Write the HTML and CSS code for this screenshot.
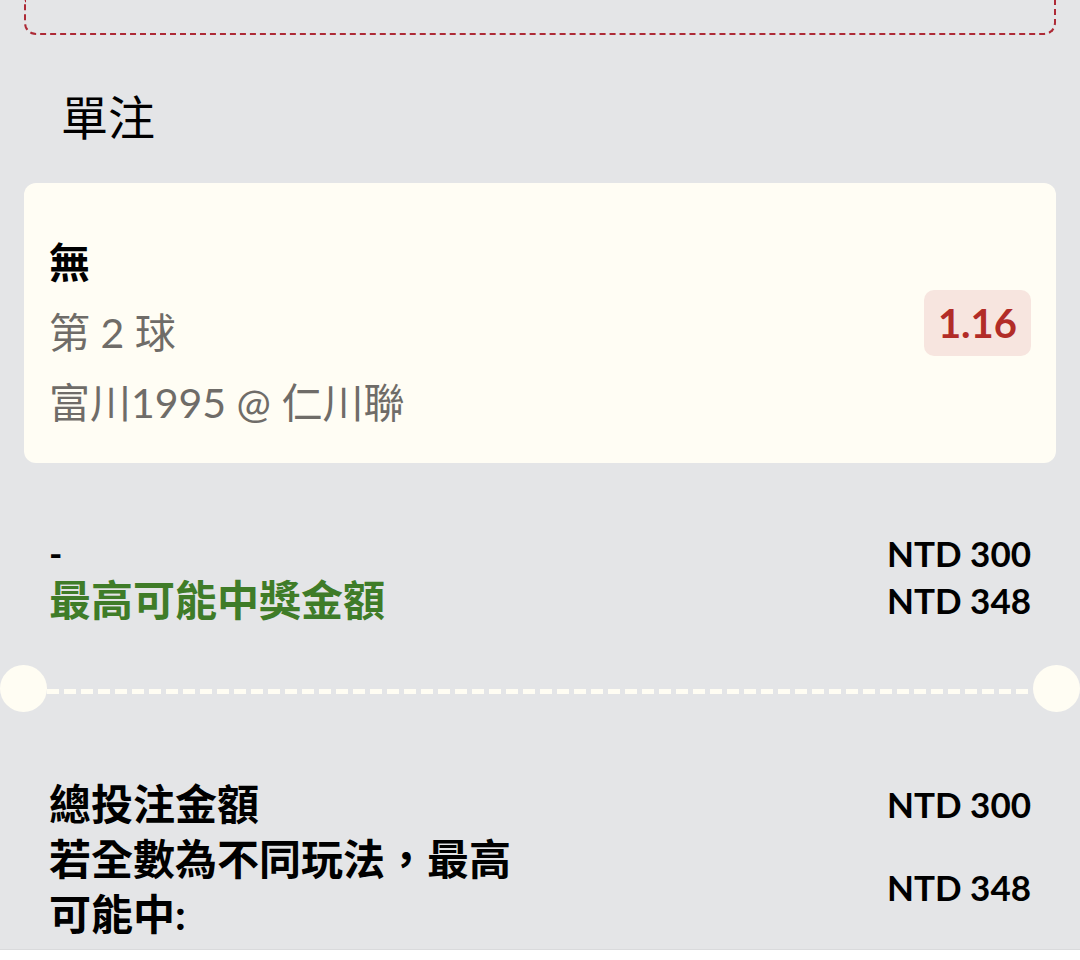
FILE: index.html
```html
<!DOCTYPE html>
<html>
  <head>
    <link rel="stylesheet" href="styles.css">
  </head>
  <body>
    <div class="promo-box"></div>

    <h2 class="section-title">單注</h2>

    <section class="bet-card">
      <div class="bet-info">
        <div class="bet-pick">無</div>
        <div class="bet-market">第 2 球</div>
        <div class="bet-match">富川1995 @ 仁川聯</div>
      </div>
      <div class="odds">1.16</div>
    </section>

    <section class="stake">
      <div class="amount-row">
        <span class="stake-label">-</span>
        <span class="amount">NTD 300</span>
      </div>
      <div class="amount-row">
        <span class="payout-label">最高可能中獎金額</span>
        <span class="amount">NTD 348</span>
      </div>
    </section>

    <div class="ticket-divider">
      <span class="notch"></span>
      <span class="dash-line"></span>
      <span class="notch"></span>
    </div>

    <section class="totals">
      <div class="total-row">
        <span class="total-label">總投注金額</span>
        <span class="amount">NTD 300</span>
      </div>
      <div class="total-row">
        <span class="total-label">若全數為不同玩法，最高可能中:</span>
        <span class="amount">NTD 348</span>
      </div>
    </section>

    <div class="footer-strip"></div>
  </body>
</html>
```

FILE: styles.css
```css
body {
  margin: 0;
  background-color: #e4e5e7;
  font-family: Lato, "Noto Sans CJK TC", sans-serif;
  color: #000000;
  overflow: hidden;
}

.promo-box {
  height: 33px;
  margin: 0 24px;
  border: 2px dashed #ad2a36;
  border-top: none;
  border-radius: 0 0 12px 12px;
}

.section-title {
  margin: 50px 0 34px 61px;
  font-size: 47px;
  font-weight: 400;
  line-height: 64px;
}

.bet-card {
  display: flex;
  justify-content: space-between;
  align-items: center;
  margin: 0 24px;
  padding: 25px 25px 25px 25px;
  background-color: #fffdf4;
  border-radius: 12px;
}

.bet-info {
  padding-top: 20px;
  line-height: 70px;
}

.bet-pick {
  font-size: 41px;
  font-weight: 700;
}

.bet-market,
.bet-match {
  font-size: 41px;
  color: #6f6c68;
}

.odds {
  padding: 6px 14px;
  background-color: #f7e5df;
  border-radius: 10px;
  color: #b22c27;
  font-size: 40px;
  font-weight: 700;
  line-height: 54px;
}

.stake {
  margin-top: 67px;
  padding: 0 49px 0 49px;
}

.amount-row,
.total-row {
  display: flex;
  justify-content: space-between;
  align-items: center;
}

.amount-row {
  line-height: 47px;
}

.stake-label {
  font-size: 36px;
  font-weight: 700;
}

.payout-label {
  font-size: 42px;
  font-weight: 700;
  color: #3f7c28;
}

.amount {
  font-size: 35px;
  font-weight: 700;
}

.ticket-divider {
  display: flex;
  align-items: center;
  margin-top: 41px;
  height: 47px;
}

.notch {
  width: 47px;
  height: 47px;
  border-radius: 50%;
  background-color: #fffdf3;
  flex-shrink: 0;
}

.dash-line {
  flex: 1;
  height: 5px;
  margin-top: 6px;
  background-image: repeating-linear-gradient(
    to right,
    #fffdf3 0 12px,
    transparent 12px 17px
  );
}

.totals {
  margin-top: 65px;
  padding: 0 49px 0 49px;
}

.total-row {
  line-height: 55px;
}

.total-label {
  max-width: 475px;
  font-size: 42px;
  font-weight: 700;
}

.footer-strip {
  margin-top: 7px;
  height: 40px;
  background-color: #ffffff;
  border-top: 1px solid #d9dadc;
}
```
